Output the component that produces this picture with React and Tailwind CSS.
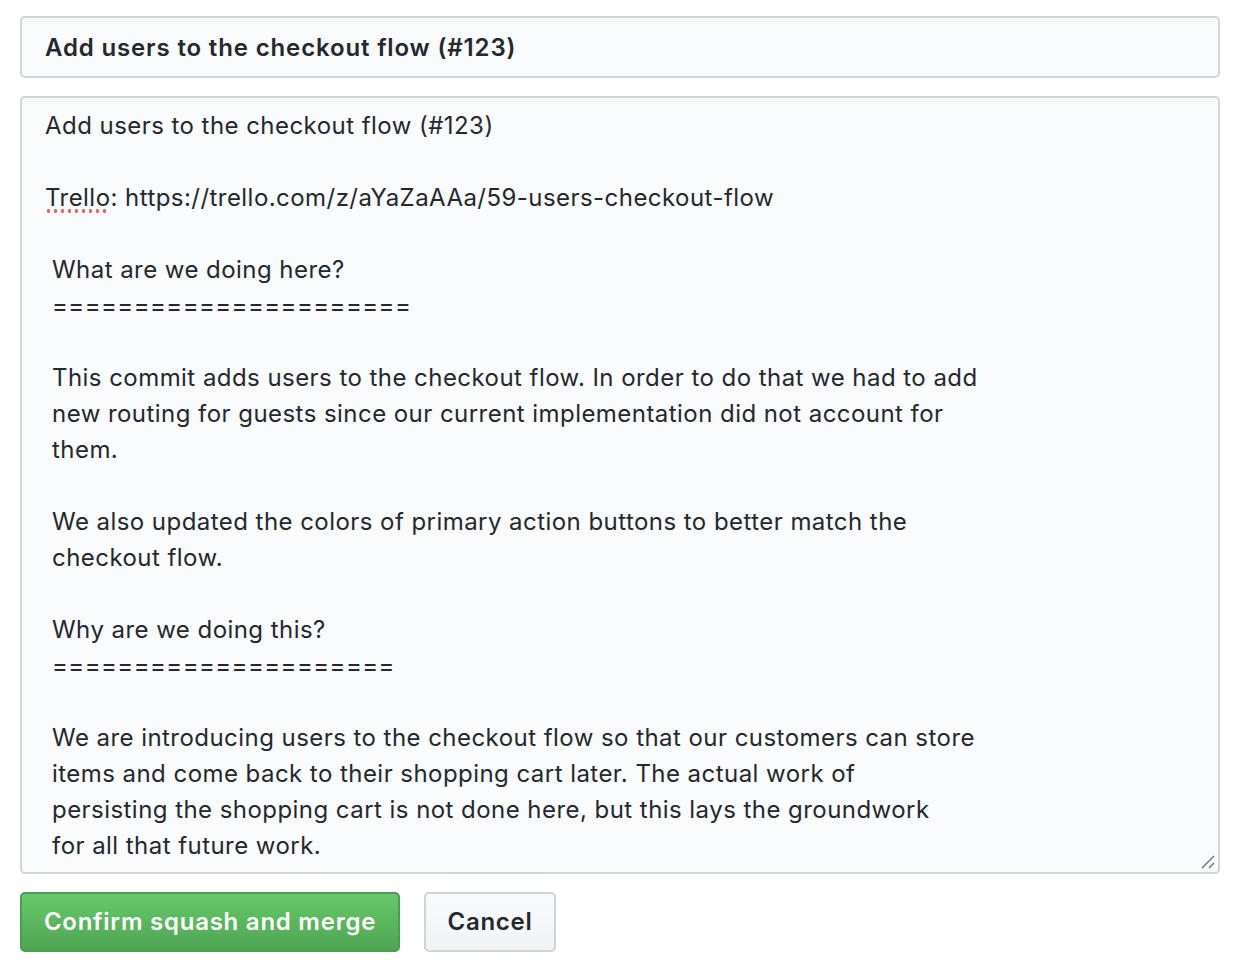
import React from "react";

const BODY_LINES = [
  { text: "Add users to the checkout flow (#123)", indent: false },
  { text: "", indent: false },
  { text: "TRELLO", indent: false },
  { text: "", indent: false },
  { text: "What are we doing here?", indent: true },
  { text: "======================", indent: true },
  { text: "", indent: true },
  { text: "This commit adds users to the checkout flow. In order to do that we had to add", indent: true },
  { text: "new routing for guests since our current implementation did not account for", indent: true },
  { text: "them.", indent: true },
  { text: "", indent: true },
  { text: "We also updated the colors of primary action buttons to better match the", indent: true },
  { text: "checkout flow.", indent: true },
  { text: "", indent: true },
  { text: "Why are we doing this?", indent: true },
  { text: "=====================", indent: true },
  { text: "", indent: true },
  { text: "We are introducing users to the checkout flow so that our customers can store", indent: true },
  { text: "items and come back to their shopping cart later. The actual work of", indent: true },
  { text: "persisting the shopping cart is not done here, but this lays the groundwork", indent: true },
  { text: "for all that future work.", indent: true },
];

function ResizeHandle() {
  return (
    <svg className="absolute bottom-[3px] right-[3px]" width="14" height="14" viewBox="0 0 14 14">
      <line x1="1" y1="13" x2="13" y2="1" stroke="#6a6a6a" strokeWidth="1.3" />
      <line x1="8" y1="13" x2="13" y2="8" stroke="#6a6a6a" strokeWidth="1.3" />
    </svg>
  );
}

function BodyLine({ line }) {
  if (line.text === "TRELLO") {
    return (
      <div className="h-9">
        <span className="relative">
          Trello
          <span className="absolute left-0 right-[2px] top-[26px] h-[4px] bg-[radial-gradient(circle,#f0625a_1.7px,transparent_2px)] bg-[length:7px_4px]" />
        </span>
        : https://trello.com/z/aYaZaAAa/59-users-checkout-flow
      </div>
    );
  }
  return <div className={`h-9 ${line.indent ? "pl-[7px]" : ""}`}>{line.text}</div>;
}

export default function App() {
  return (
    <div className="min-h-screen bg-white pl-5 pr-6 pt-4 text-[#24292e]" style={{ fontFamily: "Inter, 'Noto Sans', sans-serif" }}>
      <div className="flex h-[62px] items-center rounded-[5px] border-2 border-[#d1d5da] bg-[#fafbfc] px-[23px] pt-[2px] text-[24px] font-semibold tracking-[0.85px]">
        Add users to the checkout flow (#123)
      </div>

      <div className="relative mt-[18px] h-[778px] overflow-hidden rounded-[5px] border-2 border-[#d1d5da] bg-[#fafbfc] pl-[23px] pt-[10px] text-[24px] leading-[36px] tracking-[0.45px]">
        {BODY_LINES.map((line, i) => (
          <BodyLine key={i} line={line} />
        ))}
        <ResizeHandle />
      </div>

      <div className="mt-[18px] flex gap-6">
        <button
          type="button"
          className="h-[60px] w-[380px] rounded-[5px] border-2 border-[#4b9d50] bg-gradient-to-b from-[#67c96a] to-[#4ea553] text-[24px] font-semibold tracking-[0.75px] text-white"
        >
          Confirm squash and merge
        </button>
        <button
          type="button"
          className="h-[60px] w-[132px] rounded-[5px] border-2 border-[#d0d3d8] bg-gradient-to-b from-[#fafbfc] to-[#eff3f6] text-[24px] font-semibold tracking-[0.7px] text-[#24292e]"
        >
          Cancel
        </button>
      </div>
    </div>
  );
}
